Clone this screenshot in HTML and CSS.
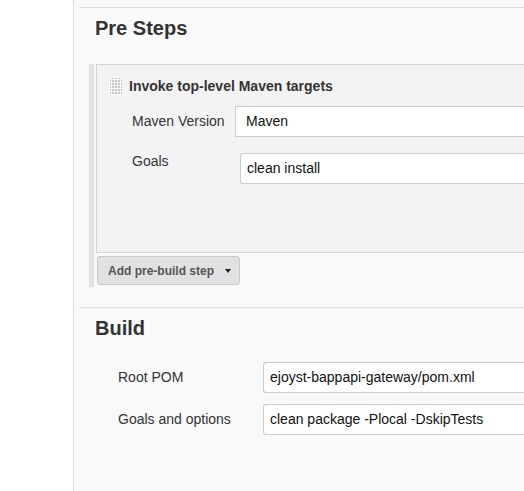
FILE: index.html
```html
<!DOCTYPE html>
<html>
<head>
<meta charset="utf-8">
<link rel="stylesheet" href="styles.css">
</head>
<body>
<div class="sidebar"></div>
<div class="main">
  <div class="content">
    <section class="section">
      <h2 class="heading">Pre Steps</h2>
      <div class="steps">
        <div class="panel">
          <div class="panel-head">
            <svg class="handle" width="13" height="18" viewBox="0 0 13 18">
              <defs>
                <pattern id="dots" width="3" height="3" patternUnits="userSpaceOnUse">
                  <rect x="0" y="0" width="2" height="2" fill="#c4c4c4"/>
                </pattern>
              </defs>
              <rect x="0" y="0" width="13" height="18" fill="#fdfdfd"/>
              <rect x="1" y="1" width="12" height="17" fill="url(#dots)"/>
            </svg>
            <span class="panel-title">Invoke top-level Maven targets</span>
          </div>
          <div class="form-grid">
            <label class="lbl lbl-select">Maven Version</label>
            <div class="select">Maven</div>
            <label class="lbl">Goals</label>
            <div class="textbox textbox-indent">clean install</div>
          </div>
        </div>
        <button class="add-btn"><span class="btn-text">Add pre-build step</span><span class="caret"></span></button>
      </div>
    </section>
    <section class="section">
      <h2 class="heading">Build</h2>
      <div class="build-grid">
        <label class="lbl lbl-mid">Root POM</label>
        <div class="textbox">ejoyst-bappapi-gateway/pom.xml</div>
        <label class="lbl lbl-mid">Goals and options</label>
        <div class="textbox">clean package -Plocal -DskipTests</div>
      </div>
    </section>
  </div>
</div>
</body>
</html>
```
FILE: styles.css
```css
html, body {
  margin: 0;
  padding: 0;
  height: 100%;
  overflow: hidden;
}
body {
  display: flex;
  font-family: "Liberation Sans", Arial, sans-serif;
  color: #333;
  background: #f9f9f9;
}
.sidebar {
  width: 73px;
  flex: none;
  background: #fff;
  border-right: 1px solid #dcdcdc;
}
.main {
  flex: 1;
  background: #f9f9f9;
  padding: 7px 0 0 5px;
  overflow: hidden;
}
.content {
  width: 520px;
}
.section {
  border-top: 1px solid #dcdcdc;
}
.section + .section {
  margin-top: 20px;
}
.heading {
  margin: 8px 0 0 16px;
  font-size: 20px;
  line-height: 24px;
  font-weight: bold;
  color: #333;
}
.steps {
  margin: 24px 0 0 10px;
  border-left: 5px solid #e2e2e2;
  padding: 0 0 2px 2px;
}
.panel {
  background: #f3f3f3;
  border: 1px solid #d4d4d4;
  border-right: none;
  padding: 12px 0 68px 0;
}
.panel-head {
  display: flex;
  align-items: center;
  height: 18px;
  padding-left: 12px;
}
.handle {
  display: block;
  flex: none;
}
.panel-title {
  margin-left: 7px;
  font-size: 14px;
  font-weight: bold;
  color: #333;
}
.form-grid {
  display: grid;
  grid-template-columns: 103px 1fr;
  row-gap: 16px;
  margin-top: 11px;
  padding-left: 35px;
}
.lbl {
  font-size: 14px;
  line-height: 16px;
  color: #333;
}
.lbl-select {
  padding-top: 7px;
}
.lbl-mid {
  padding-top: 7px;
}
.select, .textbox {
  box-sizing: border-box;
  height: 31px;
  background: #fff;
  border: 1px solid #ccc;
  font-size: 14px;
  line-height: 29px;
  color: #111;
  white-space: nowrap;
}
.select {
  padding-left: 10px;
  border-right: none;
}
.textbox {
  border-radius: 3px 0 0 3px;
  border-right: none;
  padding-left: 6px;
}
.textbox-indent {
  margin-left: 5px;
}
.add-btn {
  display: flex;
  align-items: center;
  box-sizing: border-box;
  margin: 3px 0 0 1px;
  height: 29px;
  width: 143px;
  padding: 0 0 0 10px;
  border: 1px solid #c8c8c8;
  border-radius: 3px;
  background: #e1e1e1;
  font-family: "Liberation Sans", Arial, sans-serif;
  font-size: 12px;
  font-weight: bold;
  color: #555;
  white-space: nowrap;
}
.btn-text {
  flex: none;
}
.caret {
  flex: none;
  margin-left: 11px;
  width: 0;
  height: 0;
  border-left: 3px solid transparent;
  border-right: 3px solid transparent;
  border-top: 4px solid #222;
}
.build-grid {
  display: grid;
  grid-template-columns: 145px 1fr;
  row-gap: 11px;
  margin-top: 22px;
  padding-left: 39px;
}
```
